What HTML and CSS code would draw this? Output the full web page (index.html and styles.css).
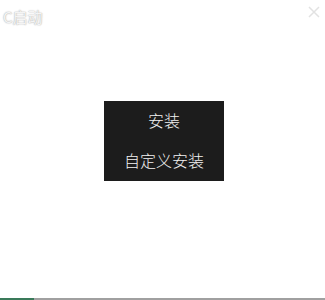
FILE: index.html
```html
<!DOCTYPE html>
<html>
<head>
  <link rel="stylesheet" href="styles.css">
</head>
<body>
  <div class="window">
    <div class="titlebar">
      <div class="title">C启动</div>
      <svg class="close" width="12" height="12" viewBox="0 0 12 12">
        <path d="M1 1 L11 11 M11 1 L1 11" stroke="#e2e2e2" stroke-width="1.5" fill="none"/>
      </svg>
    </div>

    <div class="center">
      <div class="menu">
        <div class="item">安装</div>
        <div class="item">自定义安装</div>
      </div>
    </div>

    <div class="progress">
      <div class="progress-fill"></div>
    </div>
  </div>
</body>
</html>
```

FILE: styles.css
```css
body {
  margin: 0;
  background: #fff;
  font-family: "Noto Sans CJK SC", "Liberation Sans", sans-serif;
}

.window {
  width: 325px;
  height: 300px;
  display: flex;
  flex-direction: column;
  overflow: hidden;
}

.titlebar {
  height: 32px;
  display: flex;
  justify-content: space-between;
  align-items: flex-start;
  padding: 0 5px 0 3px;
}

.title {
  margin-top: 7px;
  font-size: 15px;
  line-height: 20px;
  color: #f4f4f4;
  text-shadow: 0 0 1px #b0b0b0, 0 0 2px #c4c4c4;
}

.close {
  margin-top: 6px;
}

.center {
  flex: 1;
  display: flex;
  justify-content: center;
  padding-top: 69px;
}

.menu {
  width: 120px;
  height: 80px;
  background: #1c1c1c;
  display: flex;
  flex-direction: column;
  align-items: center;
  gap: 18px;
  padding-top: 8px;
  box-sizing: border-box;
  margin-left: 3px;
}

.item {
  color: #f2f2f2;
  font-size: 16px;
  line-height: 22px;
  font-weight: 300;
}

.progress {
  height: 2px;
  background: #a0a0a0;
}

.progress-fill {
  width: 34px;
  height: 100%;
  background: #3a7a5a;
}
```
